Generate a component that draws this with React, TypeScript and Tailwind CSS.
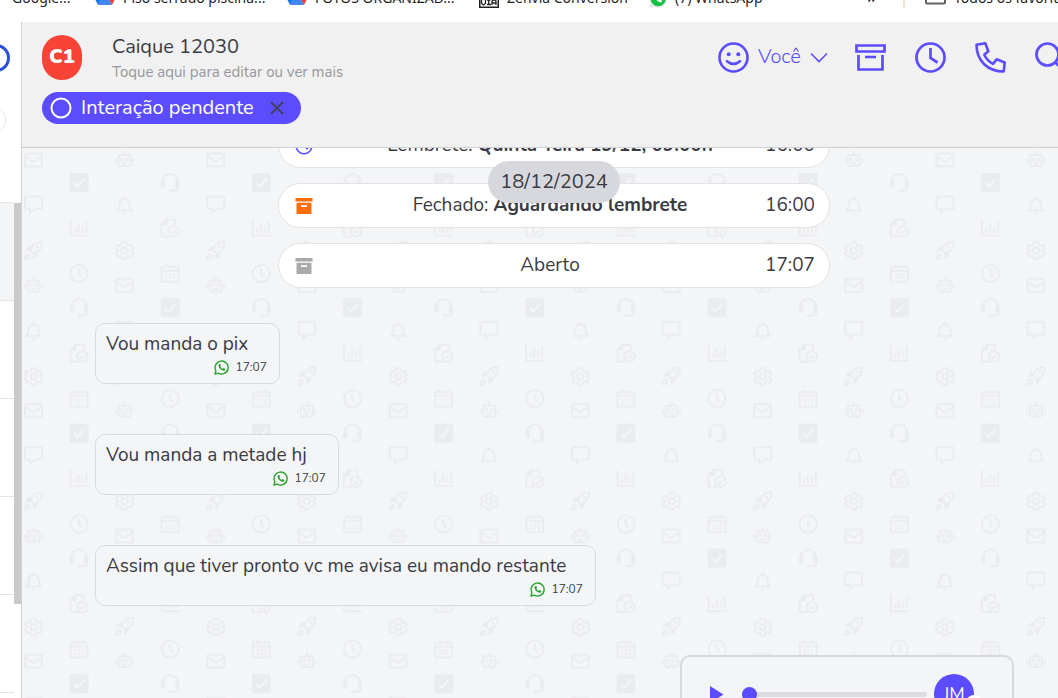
import type { ReactNode } from "react";

const EVENT_GRAY = "#a9a9a9";

function DriveIcon() {
  return (
    <svg className="mb-[3px]" width="20" height="18" viewBox="0 0 20 18" aria-hidden="true">
      <path d="M7 0h6l7 12h-6z" fill="#fbbc04" />
      <path d="M7 0 0 12l3 6 7-12z" fill="#1a73e8" />
      <path d="M3 18h14l-3-6H6z" fill="#4285f4" />
      <path d="m13.500 11.500 3.500 6.500 3-6z" fill="#ea4335" />
    </svg>
  );
}

function ZenviaIcon() {
  return (
    <svg width="20" height="20" viewBox="0 0 20 20" aria-hidden="true">
      <rect x="0.75" y="0.75" width="18.500" height="18.500" fill="#fff" stroke="#222" strokeWidth="1.500" />
      <path d="M2.500 11v4.500L4.500 17l2-1.500V11M8 12h3.500M9.700 12v4.500M8 16.500h4M13 17v-4l2-1.500 2 1.500v4m-4-2h4" fill="none" stroke="#222" strokeWidth="1.300" />
    </svg>
  );
}

function WhatsFilled() {
  return (
    <svg width="18" height="18" viewBox="0 0 18 18" aria-hidden="true">
      <path d="M0 18 1.300 13.300A9 9 0 1 1 5 16.800z" fill="#e8e8e8" />
      <circle cx="9.200" cy="8.600" r="7.600" fill="#12c143" />
      <path d="M6 5c-1 3 3 8 6.500 7.500l.5-2-2-1-1 1C8.500 9.500 8 9 7.500 7.500l.8-1L7.500 5z" fill="#fff" />
    </svg>
  );
}

function FolderIcon() {
  return (
    <svg className="mb-[3px]" width="21" height="18" viewBox="0 0 21 18" fill="none" stroke="#5f6368" strokeWidth="2" aria-hidden="true">
      <path d="M1 15.500V1.500h7l2 3h10v11q0 1-1 1H2q-1 0-1-1z" />
    </svg>
  );
}

function Bookmark({ icon, label, className }: { icon?: ReactNode; label: string; className: string }) {
  return (
    <a href="#" className={"flex shrink-0 items-end gap-2 whitespace-nowrap " + className}>
      {icon}
      <span className="leading-5">{label}</span>
    </a>
  );
}

function Smile() {
  return (
    <svg width="31" height="31" viewBox="0 0 31 31" fill="none" stroke="currentColor" strokeWidth="2.600" aria-hidden="true">
      <circle cx="15.500" cy="15.500" r="14" />
      <circle cx="10.700" cy="12.300" r="2" fill="currentColor" stroke="none" />
      <circle cx="20.300" cy="12.300" r="2" fill="currentColor" stroke="none" />
      <path d="M9 19.200q6.500 5.500 13 0" strokeLinecap="round" />
    </svg>
  );
}

function Archive() {
  return (
    <svg width="31" height="29" viewBox="0 0 31 29" fill="none" stroke="currentColor" strokeWidth="2.700" aria-hidden="true">
      <path d="M1.500 2.500h28v6h-28zM3.500 12v14.500h24V12M10 14h11" />
    </svg>
  );
}

function Clock() {
  return (
    <svg width="31" height="31" viewBox="0 0 31 31" fill="none" stroke="currentColor" strokeWidth="2.700" aria-hidden="true">
      <circle cx="15.500" cy="15.500" r="14" />
      <path d="M15.500 6v10l7 4.500" />
    </svg>
  );
}

function Phone() {
  return (
    <svg width="31" height="31" viewBox="0 0 31 31" fill="none" stroke="currentColor" strokeWidth="2.600" strokeLinejoin="round" aria-hidden="true">
      <path d="M1.500 2.800 10.300 1.300 13.300 9.300 9.300 12.700C11 16.500 14 19.800 18 21.800L21.700 17.300 29.700 20.500 28.700 29.500C13 29.500 1.500 19 1.500 2.800z" />
    </svg>
  );
}

function Search() {
  return (
    <svg width="31" height="31" viewBox="0 0 31 31" fill="none" stroke="currentColor" strokeWidth="2.700" aria-hidden="true">
      <circle cx="12.500" cy="12.500" r="11" />
      <path d="m20 20 10 10" />
    </svg>
  );
}

function SolidArchive({ color }: { color: string }) {
  return (
    <svg width="18" height="16" viewBox="0 0 18 16" fill={color} aria-hidden="true">
      <path d="M.5 0h17v3.500H.5zM1.500 4.800h15V15q0 1-1 1h-13q-1 0-1-1zM6 7.300v1.700h6V7.300z" fillRule="evenodd" />
    </svg>
  );
}

function WhatsOutline() {
  return (
    <svg width="15" height="15" viewBox="0 0 15 15" fill="none" stroke="#2aa52f" strokeWidth="1.400" aria-hidden="true">
      <path d="M1 14l.9-3.400A6.500 6.500 0 1 1 4.300 13.100z" strokeLinejoin="round" />
      <path d="M5.300 3.900c-1.400 1-.8 3.300 1 5.100 1.800 1.700 4.200 2.300 5 .8l.1-.9-1.700-.9-.9.8C7.500 8.300 6.900 7.700 6.400 6.500l.6-.8-.7-1.800z" fill="#2aa52f" stroke="none" />
    </svg>
  );
}

/* Doodle glyphs, each drawn in a 19 x 19 box. */
function Glyphs() {
  return (
    <defs>
      <g id="g-mail">
        <rect x="1" y="3" width="17" height="13" rx="1" />
        <path d="m1.500 5.500 6.500 5q1.500 1 3 0l6.500-5" />
      </g>
      <g id="g-chat">
        <path d="M2 1h15q1 0 1 1v10.500q0 1-1 1H10.500l-4.500 4v-4H2q-1 0-1-1V2q0-1 1-1z" />
      </g>
      <g id="g-rocket">
        <path d="M18 1c-4.500-.3-7.500 1-9.500 4L6.500 9l3.500 3.500 4-2C17 8.500 18.300 5.500 18 1z" />
        <path d="M7.500 5.500H4L.8 10h5zM13.500 11.500V15L9 18.300V13z" fill="#eaebed" stroke="none" />
        <circle cx="13.500" cy="5.500" r="1.500" fill="#eaebed" stroke="none" />
        <path d="M1 18c0-3 .5-4.500 2.500-4.700 2 0 2.700 1.200 2 2.700C4.800 17.500 3 18 1 18z" />
      </g>
      <g id="g-robot">
        <rect x="3.500" y="5.500" width="12" height="11" rx="1.500" />
        <path d="M9.500 1.500v4M.8 9v4M18.200 9v4M7 13.800h5" />
        <circle cx="7" cy="9.700" r="1.300" strokeWidth="1.300" />
        <circle cx="12" cy="9.700" r="1.300" strokeWidth="1.300" />
      </g>
      <g id="g-bell">
        <path d="M2.500 14.500C4.500 12 4.500 10.500 4.500 8c0-3 2-5 5-5s5 2 5 5c0 2.500 0 4 2 6.500zM9.500.8V3M8 17.500h3" />
      </g>
      <g id="g-gear">
        <path d="M7.500 1h4l.5 2.700 2 1.200 2.400-1 2 3.500-2 1.600v1.500l2 1.600-2 3.500-2.400-1-2 1.200-.5 2.200h-4L7 15.800l-2-1.200-2.400 1-2-3.500 2-1.600V9l-2-1.600 2-3.500 2.400 1 2-1.200z" strokeLinejoin="round" />
        <circle cx="9.500" cy="9.600" r="3" />
      </g>
      <g id="g-check">
        <rect x="0" y="0" width="19" height="19" rx="2" fill="#eaebed" stroke="none" />
        <path d="m4.500 10 3.300 3.500L14.500 6" stroke="#f4f5f7" strokeWidth="2.300" />
      </g>
      <g id="g-chart">
        <path d="M1 1v16h18M5.500 9.500V14M9 5.500V14M13 7.500V14M17 3v11" />
      </g>
      <g id="g-clock">
        <circle cx="9.500" cy="9.500" r="8.600" />
        <path d="M9.300 4.500v5.500l3 2.500" />
      </g>
      <g id="g-headset">
        <path d="M1.500 12V9a8 8 0 0 1 16 0v6q0 2.500-2.500 2.500h-5" />
        <path d="M1.200 8.500h2.300v5H1.200zM15.500 8.500h2.300v5h-2.300zM8 17.500h3" />
      </g>
      <g id="g-file">
        <path d="M14.500 6V2q0-1-1-1H6L1 6v11q0 1 1 1h7" />
        <path d="M6 1v5H1z" fill="#eaebed" />
        <circle cx="13" cy="12.800" r="5.300" />
        <path d="m10.500 12.800 1.800 1.800 3.200-3.400" />
      </g>
      <g id="g-calendar">
        <rect x="1" y="3" width="17" height="15" rx="1" />
        <path d="M1 7h17M5.500.5V4M13.500.5V4" />
        <path d="M5 11h9.500M5 14.300h9.500" strokeWidth="2" strokeDasharray="2 1.700" />
      </g>
    </defs>
  );
}

const DOODLES: [string, number, number][] = [
  ["mail", 2, 2.5], ["chat", 2, 47.5], ["rocket", 2, 93], ["robot", 2, 127], ["bell", 2, 173.5], ["gear", 2, 219],
  ["check", 47.5, 25], ["chart", 47.5, 70.5], ["clock", 47.5, 116], ["headset", 47.5, 150], ["file", 47.5, 195.7], ["calendar", 47.5, 241],
  ["robot", 93, 1.5], ["bell", 93, 48], ["gear", 93, 93], ["mail", 93, 128], ["chat", 93, 173], ["rocket", 93, 218.5],
  ["headset", 138.7, 25], ["file", 138.7, 70.5], ["calendar", 138.7, 115.7], ["check", 138.7, 150], ["chart", 138.7, 195.7], ["clock", 138.7, 241],
];

/* Lower halves of the glyphs that straddle the tile's bottom edge. */
const CARRIED: [string, number, number][] = [
  ["calendar", 47.5, -9.6],
  ["clock", 138.7, -9.6],
];

function Tile({ id, items }: { id: string; items: [string, number, number][] }) {
  return (
    <pattern id={id} width="182.3" height="250.6" patternUnits="userSpaceOnUse">
      <g fill="none" stroke="#eaebed" strokeWidth="1.900">
        {items.map(([name, x, y], i) => (
          <use key={i} href={"#g-" + name} x={x} y={y} />
        ))}
      </g>
    </pattern>
  );
}

function Wallpaper() {
  return (
    <svg className="pointer-events-none absolute inset-0 h-full w-full" aria-hidden="true">
      <Glyphs />
      <defs>
        <Tile id="doodles" items={DOODLES} />
        <Tile id="carried" items={CARRIED} />
      </defs>
      <rect width="100%" height="100%" fill="url(#doodles)" />
      <rect y="20" width="100%" height="100%" fill="url(#carried)" />
    </svg>
  );
}

function EventPill({ icon, children, time }: { icon: ReactNode; children: ReactNode; time: string }) {
  return (
    <div className="grid h-[45px] shrink-0 grid-cols-[50px_1fr_60px] items-center rounded-full border border-[#e3e3e5] bg-white pr-[14px] pl-4">
      {icon}
      <p className="text-center whitespace-nowrap">{children}</p>
      <time className="text-right">{time}</time>
    </div>
  );
}

function Message({ text, className }: { text: string; className: string }) {
  return (
    <article className={"flex h-[61px] max-w-full flex-col rounded-[10px] border border-[#d9dade] bg-[#f4f5f7] pt-2 pr-3 pl-[10px] " + className}>
      <p className="leading-[25px] whitespace-nowrap">{text}</p>
      <div className="flex items-center justify-end gap-[6px] text-[12px] leading-5">
        <WhatsOutline />
        <time>17:07</time>
      </div>
    </article>
  );
}

export default function App() {
  return (
    <div className="flex h-screen flex-col overflow-hidden bg-white font-['Nunito','Lato',sans-serif] text-[20px] font-normal text-[#3b3b43]">
      <nav className="h-[22px] shrink-0 overflow-hidden bg-white font-['Noto_Sans',sans-serif] text-[14px] text-[#1f1f1f]">
        <div className="-mt-4 flex h-6 items-end pl-3">
          <Bookmark label="Google..." className="w-[83px]" />
          <Bookmark icon={<DriveIcon />} label="Piso serrado piscina..." className="w-[192px]" />
          <Bookmark icon={<DriveIcon />} label="FOTOS ORGANIZAD..." className="w-[192px]" />
          <Bookmark icon={<ZenviaIcon />} label="Zenvia Conversion" className="w-[170px]" />
          <Bookmark icon={<WhatsFilled />} label="(7) WhatsApp" className="w-[218px]" />
          <button type="button" className="w-[36px] shrink-0 text-left text-[20px] leading-6">»</button>
          <span className="h-6 w-[2px] shrink-0 bg-[#fbdccf]" />
          <span className="w-5 shrink-0" />
          <Bookmark icon={<FolderIcon />} label="Todos os favoritos" className="w-[160px]" />
        </div>
      </nav>

      <div className="flex min-h-0 flex-1">
        <aside className="flex w-[21px] shrink-0 overflow-hidden">
          <div className="flex w-[14px] flex-col overflow-hidden">
            <div className="flex h-[180px] shrink-0 flex-col items-end pt-[22px]">
              <span className="mr-1 h-7 w-7 shrink-0 rounded-full border-[3px] border-[#2b50e0]" />
              <span className="mt-[33px] mr-2 h-[30px] w-[30px] shrink-0 rounded-full border border-[#e8e8ea]" />
            </div>
            <div className="h-[99px] shrink-0 border-y border-[#e3e4e6] bg-[#f4f5f7]" />
            <div className="h-[98px] shrink-0 border-b border-[#e3e4e6]" />
            <div className="h-[98px] shrink-0 border-b border-[#e3e4e6]" />
            <div className="h-[98px] shrink-0 border-b border-[#e3e4e6]" />
            <div className="h-[98px] shrink-0 border-b border-[#e3e4e6]" />
          </div>
          <div className="w-[7px] pt-[181px]">
            <div className="h-[401px] bg-[#c9c9c9]" />
          </div>
        </aside>

        <main className="flex min-w-0 flex-1 flex-col border-l border-[#d2d3d6]">
          <header className="h-[126px] shrink-0 border-b border-[#cfd0d3] bg-[#f1f1f1] pt-3 pl-5">
            <div className="flex h-[46px] items-center overflow-hidden">
              <div className="flex h-[45px] w-10 shrink-0 items-center justify-center rounded-[20px] bg-[#f84437] text-[20px] font-black text-white">
                C1
              </div>
              <div className="ml-[30px] w-[606px] shrink-0 pt-[3px]">
                <h1 className="text-[20px] leading-6">Caique 12030</h1>
                <p className="pt-[3px] text-[15px] leading-5 text-[#97979f]">Toque aqui para editar ou ver mais</p>
              </div>
              <div className="flex shrink-0 items-center text-[#5b4dff]">
                <button type="button" className="flex w-[137px] items-center gap-[9px]">
                  <Smile />
                  <span className="font-light">Você</span>
                  <svg width="18" height="11" viewBox="0 0 18 11" fill="none" stroke="currentColor" strokeWidth="1.600" aria-hidden="true">
                    <path d="m1 1.500 8 8 8-8" />
                  </svg>
                </button>
                <button type="button" aria-label="Arquivar" className="w-[60px]"><Archive /></button>
                <button type="button" aria-label="Lembrete" className="w-[60px]"><Clock /></button>
                <button type="button" aria-label="Ligar" className="w-[60px]"><Phone /></button>
                <button type="button" aria-label="Buscar" className="w-8"><Search /></button>
              </div>
            </div>
            <div className="mt-3 flex h-8 w-[259px] items-center rounded-full bg-[#5b4dff] pl-2 text-white">
              <svg width="22" height="22" viewBox="0 0 22 22" fill="none" stroke="currentColor" strokeWidth="2" aria-hidden="true">
                <circle cx="11" cy="11" r="9.500" />
              </svg>
              <span className="ml-[9px] w-[189px] whitespace-nowrap">Interação pendente</span>
              <button type="button" aria-label="Remover" className="text-[#44415f]">
                <svg width="14" height="14" viewBox="0 0 14 14" stroke="currentColor" strokeWidth="2" aria-hidden="true">
                  <path d="m1 1 12 12M13 1 1 13" />
                </svg>
              </button>
            </div>
          </header>

          <section className="relative flex min-h-0 flex-1 flex-col overflow-hidden bg-[#f4f5f7] text-[19px]">
            <Wallpaper />
            <span className="absolute top-[13px] left-[466px] z-10 flex h-[42px] w-[132px] items-center justify-center rounded-full bg-[#d7d8de] text-[20px]">
              18/12/2024
            </span>
            <div className="relative -mt-[25px] ml-64 flex w-[552px] shrink-0 flex-col gap-[15px]">
              <EventPill
                time="16:00"
                icon={
                  <svg width="18" height="18" viewBox="0 0 18 18" fill="none" stroke="#5b4dff" strokeWidth="1.600" aria-hidden="true">
                    <circle cx="9" cy="9" r="7.800" />
                    <path d="M9 4v5.500l4 2.500" />
                  </svg>
                }
              >
                Lembrete: <b>Quinta-feira 19/12, 09:00h</b>
              </EventPill>
              <EventPill time="16:00" icon={<SolidArchive color="#ff6d0a" />}>
                Fechado: <b>Aguardando lembrete</b>
              </EventPill>
              <EventPill time="17:07" icon={<SolidArchive color={EVENT_GRAY} />}>
                Aberto
              </EventPill>
            </div>

            <div className="relative mt-[35px] ml-[73px] flex shrink-0 flex-col gap-[50px]">
              <Message text="Vou manda o pix" className="w-[185px]" />
              <Message text="Vou manda a metade hj" className="w-[244px]" />
              <Message text="Assim que tiver pronto vc me avisa eu mando restante" className="w-[501px]" />
            </div>

            <article className="relative mt-[49px] mr-11 flex h-[110px] w-[334px] shrink-0 items-start self-end rounded-[10px] border-2 border-[#d6d8df] bg-[#f4f5f7] pt-[17px] pl-7">
              <button type="button" aria-label="Reproduzir" className="flex h-10 w-8 items-center text-[#5b4dff]">
                <svg width="14" height="17" viewBox="0 0 14 17" fill="currentColor" aria-hidden="true">
                  <path d="M0 0v17l13.500-8.500z" />
                </svg>
              </button>
              <label className="flex h-10 w-[185px] items-center">
                <input
                  type="range"
                  min={0}
                  max={100}
                  defaultValue={0}
                  aria-label="Posição do áudio"
                  className="h-[5px] w-full appearance-none rounded-full bg-[#dcdcde] [&::-webkit-slider-thumb]:h-[15px] [&::-webkit-slider-thumb]:w-[15px] [&::-webkit-slider-thumb]:appearance-none [&::-webkit-slider-thumb]:rounded-full [&::-webkit-slider-thumb]:bg-[#5b4dff]"
                />
              </label>
              <div className="relative ml-[7px] flex h-10 w-10 items-center justify-center rounded-full bg-[#5b4dff] text-[18px] text-white">
                JM
                <span className="absolute top-[21px] left-8 h-4 w-4 rounded-full bg-white" />
              </div>
            </article>
          </section>
        </main>
      </div>
    </div>
  );
}
